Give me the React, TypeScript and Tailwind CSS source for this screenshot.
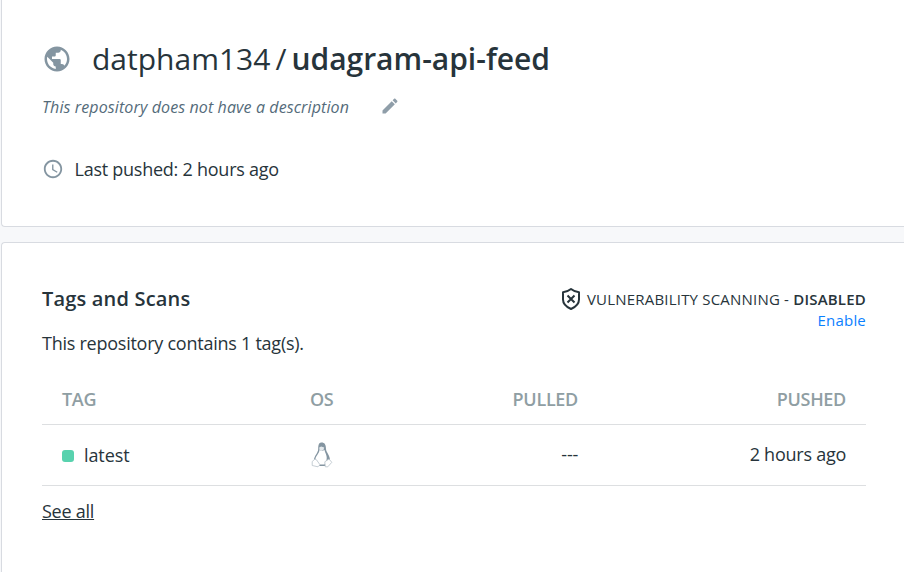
import React from "react";

function Globe() {
  return (
    <svg className="h-[30px] w-[30px] shrink-0" viewBox="0 0 24 24" fill="#8495a1">
      <path d="M12 2C6.480 2 2 6.480 2 12s4.480 10 10 10 10-4.480 10-10S17.520 2 12 2zm-1 17.930c-3.950-.490-7-3.850-7-7.930 0-.620.080-1.210.210-1.790L9 15v1c0 1.100.900 2 2 2v1.930zm6.900-2.540c-.260-.810-1-1.390-1.900-1.390h-1v-3c0-.550-.450-1-1-1H8v-2h2c.550 0 1-.450 1-1V7h2c1.100 0 2-.900 2-2v-.410c2.930 1.190 5 4.060 5 7.410 0 2.080-.800 3.970-2.100 5.390z" />
    </svg>
  );
}

function Pencil() {
  return (
    <svg className="h-5 w-5 shrink-0" viewBox="0 0 24 24" fill="#8f9ea9">
      <path d="M3 17.250V21h3.750L17.810 9.940l-3.750-3.750L3 17.250zM20.710 7.040c.390-.390.390-1.020 0-1.410l-2.340-2.340c-.390-.390-1.020-.390-1.410 0l-1.830 1.830 3.750 3.750 1.830-1.830z" />
    </svg>
  );
}

function Clock() {
  return (
    <svg className="h-[22px] w-[22px] shrink-0" viewBox="0 0 24 24" fill="#8495a1">
      <path d="M11.990 2C6.470 2 2 6.480 2 12s4.470 10 9.990 10C17.520 22 22 17.520 22 12S17.520 2 11.990 2zM12 20c-4.420 0-8-3.580-8-8s3.580-8 8-8 8 3.580 8 8-3.580 8-8 8zm.5-13H11v6l5.250 3.150.750-1.230-4.500-2.670z" />
    </svg>
  );
}

function Shield() {
  return (
    <svg className="h-6 w-6 shrink-0" viewBox="0 0 24 24" fill="none" stroke="#27343b" strokeWidth="2" strokeLinejoin="round">
      <path d="M12 2 C9.500 4 7 5 4 5.300 V12.500 C4 17 7.500 20 12 22 C16.500 20 20 17 20 12.500 V5.300 C17 5 14.500 4 12 2Z" />
      <path d="M8.500 8.500l7 7M15.500 8.500l-7 7" />
    </svg>
  );
}

function Tux() {
  return (
    <svg className="ml-px h-[26px] w-[22px]" viewBox="0 0 22 26">
      <path d="M7.200 7C7.200 2.500 8 .5 10.700 .5S15 2.500 15 7c0 3 4.500 7 4 12l-3 5H7l-4-6c0-4 4.200-7 4.200-11z" fill="#8495a1" />
      <path d="M8.500 8l2.500 1 2.500-1c1 4 3 6 2 10l-2 4.500H8.200L4.500 17c0-3 3.500-5 4-9z" fill="#fff" />
      <path d="M8.200 5.500l2-1 3 1-.7 2.500-2 1-2-1z" fill="#e4e9ec" />
      <path d="M4 17l-2.800 2.500v4L7 24.800l2-2-3.500-5zM18 17l2.800 3.300-4 4.500h-2.500l-.500-5z" fill="#fff" stroke="#b7c2c9" strokeWidth=".8" />
    </svg>
  );
}

export default function App() {
  return (
    <main className="h-[572px] w-[904px] overflow-hidden bg-[#f7f8fa] pl-px font-['Open_Sans',sans-serif] text-[18px] font-normal tracking-[-0.25px] text-[#27343b]">
      <section className="h-[227px] rounded-bl border-b border-l border-[#d8dbe1] bg-white pl-10 pt-[39px]">
        <div className="flex h-10 items-center">
          <Globe />
          <h1 className="ml-5 whitespace-pre pb-px text-[30px] tracking-[0px]">datpham134<span className="mx-[5px]">/</span><b className="font-semibold">udagram-api-feed</b></h1>
        </div>
        <div className="mt-[18px] flex h-5 items-center text-[16px] italic tracking-[0.11px] text-[#546b7a]">
          <span className="mr-[31px]">This repository does not have a description</span>
          <span className="-mt-0.5"><Pencil /></span>
        </div>
        <div className="mt-[40px] flex h-6 items-center">
          <Clock />
          <span className="ml-[10.5px]">Last pushed: 2 hours ago</span>
        </div>
      </section>

      <section className="mt-[15px] h-[340px] rounded-tl border-l border-t border-[#d8dbe1] bg-white pl-10 pr-[38px] pt-[43px]">
        <div className="flex h-[71px] justify-between">
          <div>
            <h2 className="text-[20px] font-semibold leading-[26px] tracking-[0.18px]">Tags and Scans</h2>
            <p className="mt-[19px] leading-6">This repository contains 1 tag(s).</p>
          </div>
          <div className="text-right text-[15px] tracking-[0.2px]">
            <div className="flex h-[26px] items-center"><Shield /><span className="ml-1">VULNERABILITY SCANNING - <b className="font-semibold">DISABLED</b></span></div>
            <a className="block leading-4 text-[#0b80ff]">Enable</a>
          </div>
        </div>
        <table className="mt-[18px] w-full table-fixed">
          <thead>
            <tr className="h-[49px] border-b border-[#dddfe1] tracking-[-0.3px] text-[#8f9ea3]">
              <th className="w-[248px] pl-5 text-left font-semibold">TAG</th>
              <th className="w-[110px] pl-5 text-left font-semibold">OS</th>
              <th className="pr-5 text-right font-semibold">PULLED</th>
              <th className="w-[268px] pr-5 text-right font-semibold">PUSHED</th>
            </tr>
          </thead>
          <tbody>
            <tr className="h-[61px] border-b border-[#dddfe1]">
              <td className="pl-5 pt-0.5 tracking-[-0.1px]"><div className="flex items-center"><span className="mr-[10px] h-3 w-3 rounded-[3px] bg-[#58d2ae]" />latest</div></td>
              <td className="pl-5"><Tux /></td>
              <td className="pr-5 text-right">---</td>
              <td className="pr-5 text-right">2 hours ago</td>
            </tr>
          </tbody>
        </table>
        <a className="mt-[13px] block leading-6 underline">See all</a>
      </section>
    </main>
  );
}
